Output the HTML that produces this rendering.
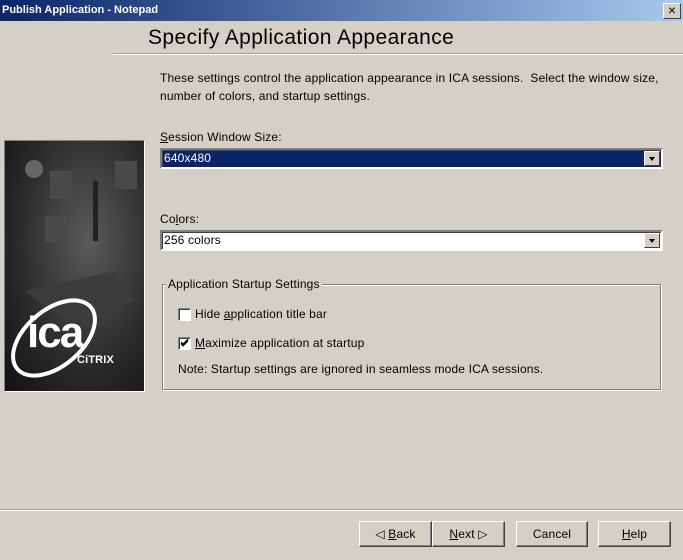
<!DOCTYPE html>
<html><head><meta charset="utf-8"><style>
*{margin:0;padding:0;box-sizing:border-box}
body{width:683px;height:560px;background:#d4d0c8;font-family:"Liberation Sans",Arial,sans-serif;font-size:12px;letter-spacing:0.15px;color:#000;position:relative;overflow:hidden}
.abs{position:absolute}
.title{left:0;top:0;width:683px;height:21px;background:linear-gradient(to right,#0a246a,#a6caf0);color:#fff;font-weight:bold;font-size:11px;letter-spacing:0;line-height:21px;padding-left:2px}
.close{right:2px;top:3px;width:18px;height:16px;background:#d4d0c8;border:1px solid;border-color:#fff #404040 #404040 #fff;font-size:14px;line-height:13px;text-align:center;color:#000;font-weight:normal}
.u{text-decoration:underline}
.combo{height:21px;border:2px solid;border-color:#808080 #fff #fff #808080;box-shadow:inset 1px 1px 0 #404040;background:#fff;padding-left:2px;line-height:17px}
.arrow{position:absolute;right:1px;top:1px;width:16px;height:15px;background:#d4d0c8;border:1px solid;border-color:#fff #404040 #404040 #fff}
.arrow:after{content:"";position:absolute;left:4px;top:5px;border-left:3.5px solid transparent;border-right:3.5px solid transparent;border-top:4px solid #000}
.btn{height:26px;border:1px solid;border-color:#fff #404040 #404040 #fff;box-shadow:inset -1px -1px 0 #808080;text-align:center;line-height:24px;font-size:12px}
.cb{width:13px;height:13px;background:#fff;border:1px solid;border-color:#808080 #fff #fff #808080;box-shadow:inset 1px 1px 0 #404040}
</style></head><body>
<div class="abs title">Publish Application - Notepad<div class="abs close">×</div></div>
<div class="abs" style="left:148px;top:26px;font-size:21px;letter-spacing:0.4px">Specify Application Appearance</div>
<div class="abs" style="left:113px;top:53px;width:570px;height:2px;border-top:1px solid #a0a0a0;border-bottom:1px solid #fff"></div>
<div class="abs" style="left:160px;top:69px;width:515px;line-height:18px">These settings control the application appearance in ICA sessions.&nbsp; Select the window size, number of colors, and startup settings.</div>
<div class="abs" style="left:4px;top:140px;width:141px;height:252px;background:radial-gradient(ellipse at 60% 40%,#5a5a5a,#2a2a2a 60%,#111);border:1px solid #fff;border-left-color:#808080;border-top-color:#808080">
<svg width="139" height="250" viewBox="0 0 139 250">
<circle cx="29" cy="28" r="9" fill="#666"/>
<rect x="45" y="30" width="22" height="28" fill="#4a4a4a"/><rect x="110" y="20" width="22" height="28" fill="#4a4a4a"/><rect x="40" y="75" width="24" height="26" fill="#4a4a4a"/>
<path d="M20 150 L110 130 L130 160 L60 180Z" fill="#3c3c3c"/>
<rect x="88" y="40" width="5" height="60" fill="#222"/>
<ellipse cx="49" cy="197" rx="48" ry="28" fill="none" stroke="#fff" stroke-width="4" transform="rotate(-40 49 197)"/>
<text x="22" y="206" fill="#fff" font-family="Liberation Sans" font-weight="bold" font-size="44" letter-spacing="-2">ica</text>
<text x="72" y="222" fill="#fff" font-family="Liberation Sans" font-weight="bold" font-size="11">CiTRIX</text>
</svg></div>
<div class="abs" style="left:160px;top:130px"><span class="u">S</span>ession Window Size:</div>
<div class="abs combo" style="left:160px;top:148px;width:503px;background:#0a246a;color:#fff">640x480<div class="arrow"></div></div>
<div class="abs" style="left:160px;top:212px">Co<span class="u">l</span>ors:</div>
<div class="abs combo" style="left:160px;top:230px;width:503px">256 colors<div class="arrow"></div></div>
<div class="abs" style="left:162px;top:284px;width:499px;height:106px;border:1px solid #808080;box-shadow:1px 1px 0 #fff,inset 1px 1px 0 #fff"></div>
<div class="abs" style="left:166px;top:277px;background:#d4d0c8;padding:0 2px">Application Startup Settings</div>
<div class="abs cb" style="left:178px;top:308px"></div>
<div class="abs" style="left:195px;top:307px">Hide <span class="u">a</span>pplication title bar</div>
<div class="abs cb" style="left:178px;top:337px"><svg width="11" height="11" style="position:absolute;left:0;top:0"><path d="M2 5 L4 7 L9 2 M2 6 L4 8 L9 3 M2 4 L4 6 L9 1" stroke="#000" fill="none"/></svg></div>
<div class="abs" style="left:195px;top:336px"><span class="u">M</span>aximize application at startup</div>
<div class="abs" style="left:178px;top:362px">Note: Startup settings are ignored in seamless mode ICA sessions.</div>
<div class="abs" style="left:0;top:509px;width:683px;height:2px;border-top:1px solid #a0a0a0;border-bottom:1px solid #fff"></div>
<div class="abs btn" style="left:359px;top:521px;width:73px">&#9665; <span class="u">B</span>ack</div>
<div class="abs btn" style="left:432px;top:521px;width:73px"><span class="u">N</span>ext &#9655;</div>
<div class="abs btn" style="left:516px;top:521px;width:72px">Cancel</div>
<div class="abs btn" style="left:598px;top:521px;width:73px"><span class="u">H</span>elp</div>
</body></html>
